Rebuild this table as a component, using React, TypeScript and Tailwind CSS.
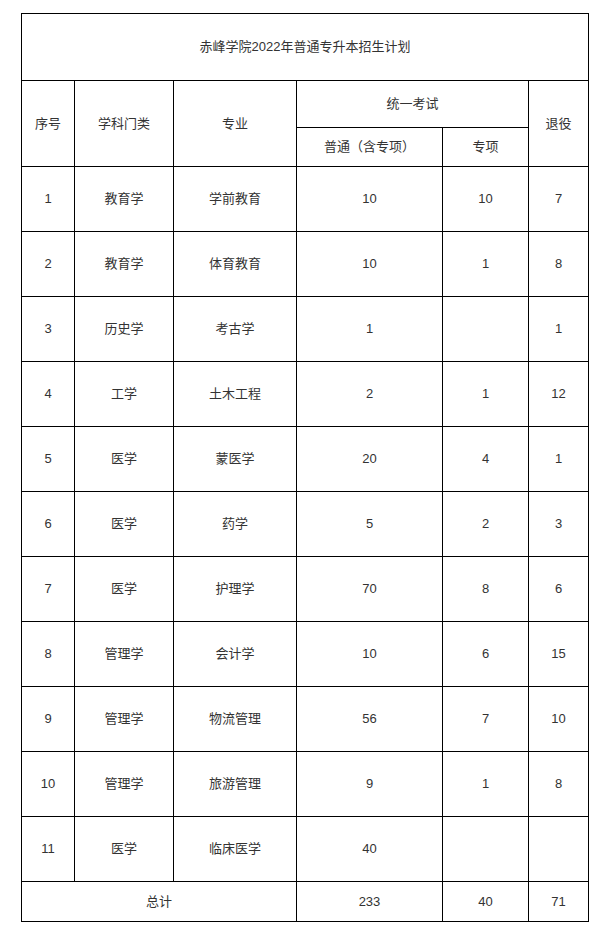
import React from "react";

const rows: [string, string, string, string, string, string][] = [
  ["1", "教育学", "学前教育", "10", "10", "7"],
  ["2", "教育学", "体育教育", "10", "1", "8"],
  ["3", "历史学", "考古学", "1", "", "1"],
  ["4", "工学", "土木工程", "2", "1", "12"],
  ["5", "医学", "蒙医学", "20", "4", "1"],
  ["6", "医学", "药学", "5", "2", "3"],
  ["7", "医学", "护理学", "70", "8", "6"],
  ["8", "管理学", "会计学", "10", "6", "15"],
  ["9", "管理学", "物流管理", "56", "7", "10"],
  ["10", "管理学", "旅游管理", "9", "1", "8"],
  ["11", "医学", "临床医学", "40", "", ""],
];

export default function App() {
  const td = "border border-black text-center align-middle p-0";
  return (
    <div
      className="w-[604px] h-[928px] bg-white pt-[13px] pl-[21px] text-[13px] text-[#333]"
      style={{ fontFamily: '"Liberation Sans", "Noto Sans CJK SC", sans-serif' }}
    >
      <table className="border-collapse table-fixed w-[567px]">
        <colgroup>
          <col className="w-[53px]" />
          <col className="w-[99px]" />
          <col className="w-[123px]" />
          <col className="w-[146px]" />
          <col className="w-[86px]" />
          <col className="w-[60px]" />
        </colgroup>
        <tbody>
          <tr className="h-[67px]">
            <td colSpan={6} className={td}>
              赤峰学院2022年普通专升本招生计划
            </td>
          </tr>
          <tr className="h-[47px]">
            <td rowSpan={2} className={td}>序号</td>
            <td rowSpan={2} className={td}>学科门类</td>
            <td rowSpan={2} className={td}>专业</td>
            <td colSpan={2} className={td}>统一考试</td>
            <td rowSpan={2} className={td}>退役</td>
          </tr>
          <tr className="h-[39px]">
            <td className={td}>普通（含专项）</td>
            <td className={td}>专项</td>
          </tr>
          {rows.map((r) => (
            <tr key={r[0]} className="h-[65px]">
              {r.map((c, i) => (
                <td key={i} className={td}>{c}</td>
              ))}
            </tr>
          ))}
          <tr className="h-[40px]">
            <td colSpan={3} className={td}>总计</td>
            <td className={td}>233</td>
            <td className={td}>40</td>
            <td className={td}>71</td>
          </tr>
        </tbody>
      </table>
    </div>
  );
}
